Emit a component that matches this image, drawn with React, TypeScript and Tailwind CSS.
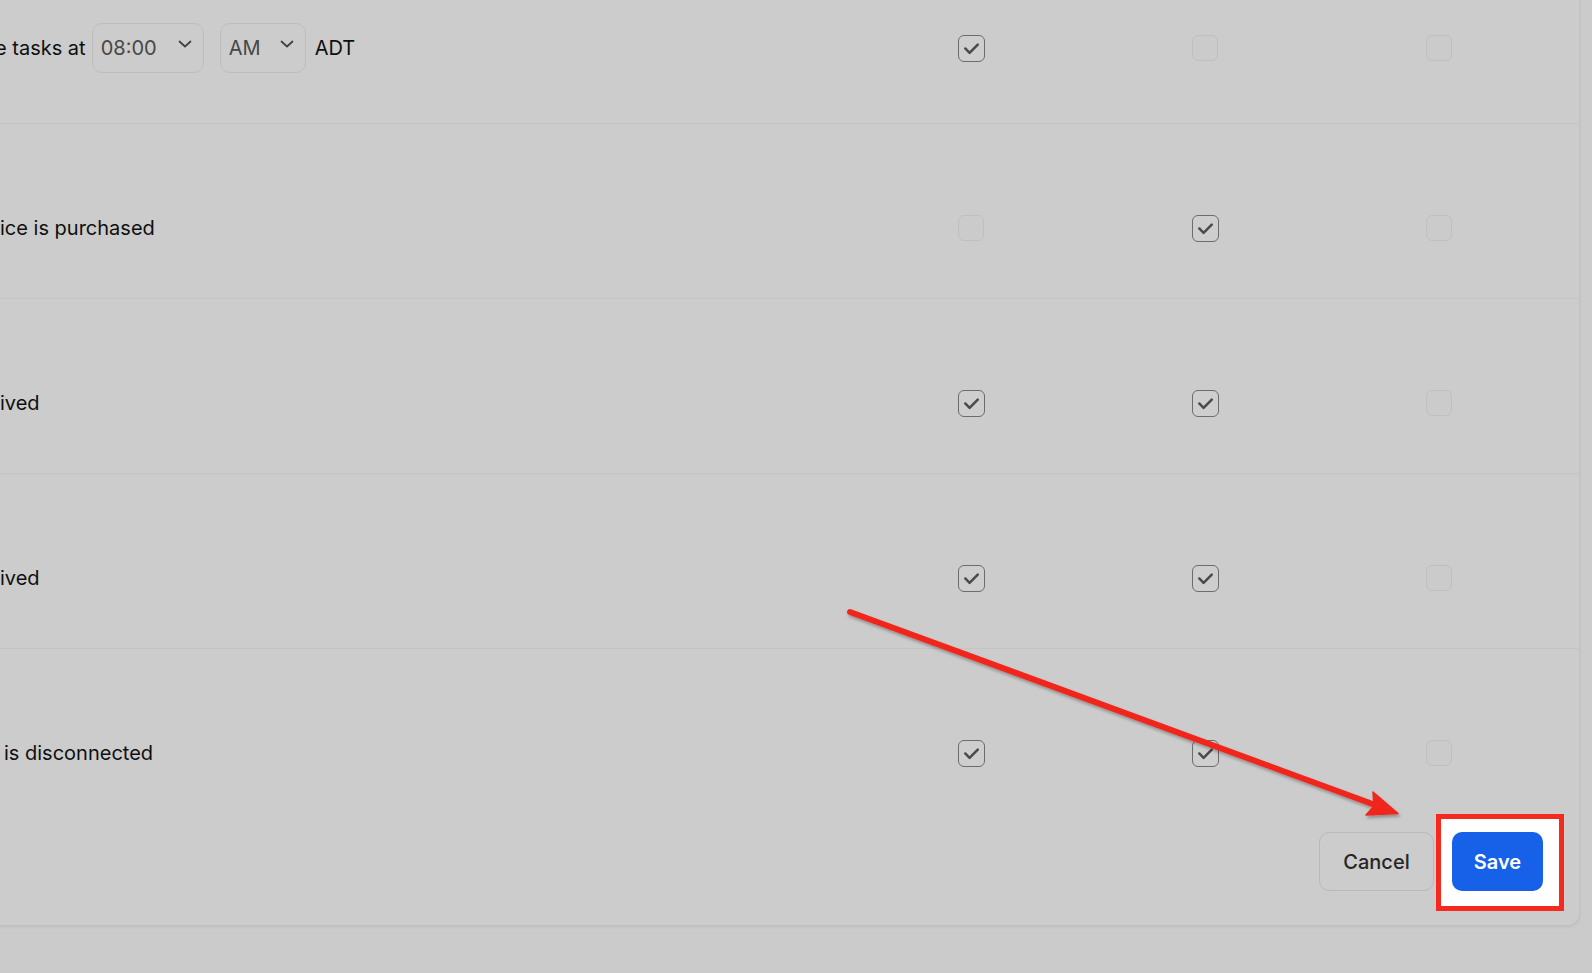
import type { ReactNode } from 'react';

type Channel = 'email' | 'sms' | 'push';

interface NotificationRow {
  id: string;
  label: ReactNode;
  indent: string;
  channels: Record<Channel, boolean>;
}

const CHANNELS: Channel[] = ['email', 'sms', 'push'];

function Chevron() {
  return (
    <svg width="14" height="8" viewBox="0 0 14 8" className="-translate-y-1 text-[#3f3f3f]" fill="none">
      <polyline points="1.5,1.5 7,6.5 12.5,1.5" stroke="currentColor" strokeWidth="1.7" strokeLinecap="round" strokeLinejoin="round" />
    </svg>
  );
}

function SelectBox({ value, width }: { value: string; width: string }) {
  return (
    <div className={`flex h-[50px] ${width} items-center justify-between rounded-[10px] border border-[#bdbdbd] bg-[#cccccc] pl-[8px] pr-[11px]`}>
      <span className="text-[20px] text-[#474747]">{value}</span>
      <Chevron />
    </div>
  );
}

function Checkbox({ checked }: { checked: boolean }) {
  if (!checked) {
    return <div className="h-[26px] w-[26px] rounded-[6px] border border-[#bfbfbf] bg-[#cbcbcb]" />;
  }
  return (
    <div className="flex h-[27px] w-[27px] items-center justify-center rounded-[6px] border-[1.5px] border-[#6c6c6c] bg-[#cecece]">
      <svg width="26" height="26" viewBox="0 0 26 26" fill="none">
        <polyline points="6.5,13.5 11,18 19.5,9.5" stroke="#4a4a4a" strokeWidth="2.6" strokeLinecap="round" strokeLinejoin="round" />
      </svg>
    </div>
  );
}

const rows: NotificationRow[] = [
  {
    id: 'daily',
    indent: '-ml-[5px]',
    label: (
      <div className="flex items-center">
        <span>e tasks at</span>
        <div className="ml-[6px]">
          <SelectBox value="08:00" width="w-[112px]" />
        </div>
        <div className="ml-4">
          <SelectBox value="AM" width="w-[86px]" />
        </div>
        <span className="ml-[9px]">ADT</span>
      </div>
    ),
    channels: { email: true, sms: false, push: false },
  },
  { id: 'purchase', indent: '', label: 'ice is purchased', channels: { email: false, sms: true, push: false } },
  { id: 'payment', indent: '', label: 'ived', channels: { email: true, sms: true, push: false } },
  { id: 'message', indent: '', label: 'ived', channels: { email: true, sms: true, push: false } },
  { id: 'offline', indent: 'ml-[4px]', label: 'is disconnected', channels: { email: true, sms: true, push: false } },
];

function Arrow() {
  return (
    <svg className="pointer-events-none absolute inset-0" width="1592" height="973" viewBox="0 0 1592 973">
      <defs>
        <filter id="arrow-shadow" x="-5%" y="-5%" width="110%" height="120%">
          <feDropShadow dx="1.5" dy="2.5" stdDeviation="1.5" floodColor="#000" floodOpacity="0.3" />
        </filter>
      </defs>
      <g filter="url(#arrow-shadow)" fill="#f0281d" stroke="#f0281d">
        <line x1="850" y1="612" x2="1378" y2="806" strokeWidth="6" strokeLinecap="round" />
        <polygon points="1398,813.5 1366,815 1374,806 1373,792" strokeWidth="1.5" strokeLinejoin="round" />
      </g>
    </svg>
  );
}

export default function App() {
  return (
    <div className="relative h-[973px] w-[1592px] overflow-hidden bg-[#cbcbcb] font-['Inter',sans-serif] text-[20px] text-[#0f0f0f]">
      <div className="-ml-[24px] -mt-[61px] mr-[12px] flex flex-col rounded-br-[12px] border-b border-r border-[#c1c1c1] bg-[#cccccc] shadow-[0_1px_3px_rgba(0,0,0,0.06)]">
        {rows.map((row, i) => (
          <div
            key={row.id}
            className={`grid grid-cols-[1fr_234px_234px_234px] items-center pl-[24px] pr-[23px] pt-[84px] ${i < rows.length - 1 ? 'pb-[50px] border-b border-[#c4c4c4]' : ''}`}
          >
            <div className={`flex min-h-10 items-center whitespace-nowrap ${row.indent}`}>{row.label}</div>
            {CHANNELS.map((ch) => (
              <div key={ch} className="flex justify-center">
                <Checkbox checked={row.channels[ch]} />
              </div>
            ))}
          </div>
        ))}

        <div className="flex justify-end gap-[18px] pb-[34px] pr-[36px] pt-[59px]">
          <button className="h-[59px] w-[115px] rounded-[10px] border border-[#b9b9b9] bg-[#cccccc] text-[20px] font-medium text-[#262626]">
            Cancel
          </button>
          <div className="relative">
            <span className="absolute -bottom-[20px] -left-[16px] -right-[21px] -top-[18px] border-[5px] border-[#f52a1f] bg-white" />
            <button className="relative h-[59px] w-[91px] rounded-[10px] bg-[#1760e8] text-[20px] font-semibold text-white">
              Save
            </button>
          </div>
        </div>
      </div>
      <Arrow />
    </div>
  );
}
